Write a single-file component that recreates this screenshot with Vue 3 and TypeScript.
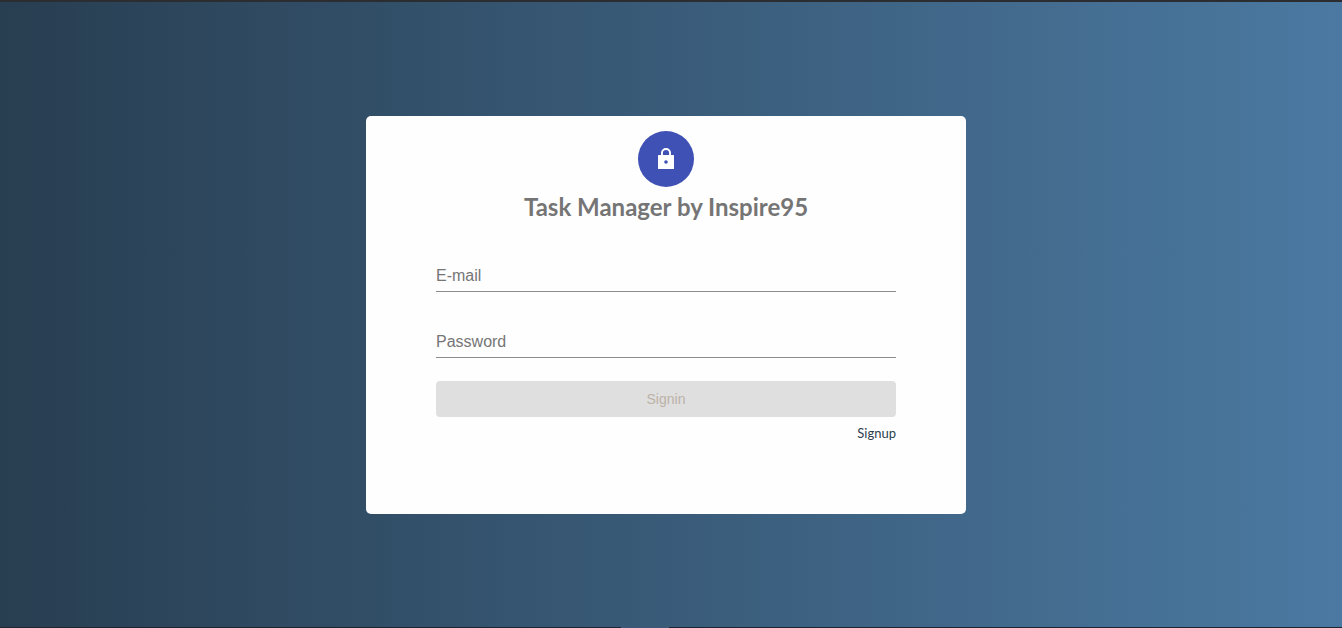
<script setup lang="ts">
import { computed, ref } from 'vue'

const email = ref<string>('')
const password = ref<string>('')
const canSubmit = computed<boolean>(() => email.value !== '' && password.value !== '')
</script>

<template>
  <main class="page">
    <section class="card">
      <div class="badge">
        <svg class="lock" viewBox="0 0 24 24" aria-hidden="true">
          <path
            fill="currentColor"
            fill-rule="evenodd"
            d="M17 8V6a5 5 0 0 0-10 0V8H4.500A.5.5 0 0 0 4 8.500V21.500A.5.5 0 0 0 4.500 22H19.500A.5.5 0 0 0 20 21.500V8.500A.5.5 0 0 0 19.500 8ZM8.900 8V6a3.100 3.100 0 0 1 6.200 0V8ZM12 16.800a1.800 1.800 0 1 1 0-3.600 1.800 1.800 0 0 1 0 3.600Z"
          />
        </svg>
      </div>
      <h1 class="title">Task Manager by Inspire95</h1>
      <form class="form" @submit.prevent>
        <div class="field">
          <input id="email" v-model="email" type="email" placeholder=" " />
          <label for="email">E-mail</label>
        </div>
        <div class="field">
          <input id="password" v-model="password" type="password" placeholder=" " />
          <label for="password">Password</label>
        </div>
        <button class="submit" type="submit" :disabled="!canSubmit">Signin</button>
      </form>
      <a class="signup" href="#signup">Signup</a>
    </section>
    <span class="handle"></span>
  </main>
</template>

<style>
body {
  margin: 0;
}
</style>

<style scoped>
.page {
  position: relative;
  box-sizing: border-box;
  min-height: 100vh;
  display: flex;
  align-items: center;
  justify-content: center;
  padding-right: 10px;
  border-top: 2px solid #2b2d31;
  border-bottom: 1px solid #1f2433;
  background: linear-gradient(to right, #283e51, #4b79a1);
  font-family: Lato, "Liberation Sans", sans-serif;
}
.handle {
  position: absolute;
  bottom: -1px;
  left: 50%;
  width: 48px;
  height: 1px;
  margin-left: -50px;
  background: #405878;
}
.card {
  box-sizing: border-box;
  width: 100%;
  max-width: 600px;
  display: flex;
  flex-direction: column;
  padding: 15px 70px 73px;
  border-radius: 5px;
  background: #fefefe;
}
.badge {
  align-self: center;
  width: 56px;
  height: 56px;
  display: flex;
  align-items: center;
  justify-content: center;
  border-radius: 50%;
  background: #3f51b5;
  color: #fff;
}
.lock {
  width: 24px;
  height: 24px;
}
.title {
  margin: 0;
  font-size: 24px;
  line-height: 40px;
  font-weight: 700;
  text-align: center;
  color: #757575;
}
.form {
  display: flex;
  flex-direction: column;
  gap: 18px;
  padding-top: 17px;
}
.field {
  position: relative;
  padding-top: 16px;
}
.field input {
  box-sizing: border-box;
  display: block;
  width: 100%;
  height: 32px;
  padding: 6px 0;
  border: 0;
  border-bottom: 1px solid #8c8c8c;
  border-radius: 0;
  outline: 0;
  background: transparent;
  color: #212121;
  font: 16px/20px "Liberation Sans", Arial, sans-serif;
}
.field label {
  position: absolute;
  left: 0;
  top: 22px;
  font: 16px/20px "Liberation Sans", Arial, sans-serif;
  color: #757575;
  pointer-events: none;
}
.field input:focus + label,
.field input:not(:placeholder-shown) + label {
  top: 0;
  font-size: 12px;
}
.submit {
  height: 36px;
  margin-top: 5px;
  padding: 0 16px;
  border: 0;
  border-radius: 4px;
  background: #3f51b5;
  color: #fff;
  font: 14px/24px "Liberation Sans", Arial, sans-serif;
}
.submit:disabled {
  background: #dfdfdf;
  color: #bcb2a8;
}
.signup {
  align-self: flex-end;
  margin-top: 8px;
  font-size: 13px;
  line-height: 16px;
  color: #2c3e50;
  text-decoration: none;
}
</style>
